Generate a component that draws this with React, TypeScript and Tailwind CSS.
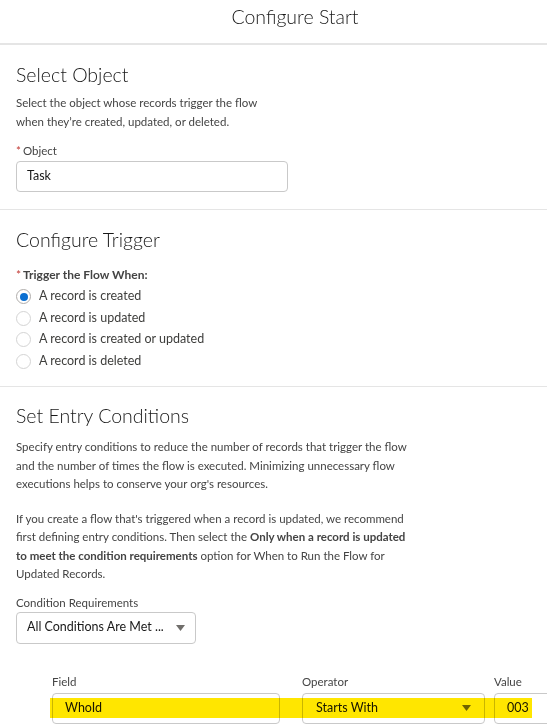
import React from 'react';

const font = { fontFamily: 'Lato, "Open Sans", "Liberation Sans", sans-serif' };

const Caret = () => (
  <svg width="9" height="6" viewBox="0 0 9 6" className="shrink-0">
    <path d="M0 0h9L4.5 6z" fill="#706e6b" />
  </svg>
);

const Radio = ({ label, checked }: { label: string; checked?: boolean }) => (
  <div className="flex items-center h-[21.5px]">
    <span
      className={`w-[15px] h-[15px] rounded-full border flex items-center justify-center bg-white ${
        checked ? 'border-[#b0adab]' : 'border-[#d4d4d4]'
      }`}
    >
      {checked && <span className="w-[8px] h-[8px] rounded-full bg-[#0b6fd1]" />}
    </span>
    <span className="ml-[8px] text-[12.5px] text-[#3e3e3c]">{label}</span>
  </div>
);

export default function App() {
  return (
    <div className="w-[547px] h-[726px] overflow-hidden bg-white text-[#444444]" style={font}>
      {/* header */}
      <div className="h-[45px] border-b-2 border-[#e5e5e5] flex items-center justify-center pl-[43px]">
        <h1 className="text-[19.5px] font-light text-[#181818] -mt-[9px]">Configure Start</h1>
      </div>

      {/* select object */}
      <section className="px-4 pt-4 pb-[17px] border-b border-[#e5e5e5]">
        <h2 className="text-[19.5px] leading-[28px] font-light text-[#181818]">Select Object</h2>
        <p className="mt-1 text-[11.5px] leading-[19px]">
          Select the object whose records trigger the flow
          <br />
          when they’re created, updated, or deleted.
        </p>
        <div className="mt-[11px] text-[11.5px] leading-[18px]">
          <span className="text-[#c23934] mr-[2px]">*</span>Object
        </div>
        <div className="mt-[1px] w-[272px] h-[31px] border border-[#c9c9c9] rounded-[4px] flex items-center px-[10px] text-[12.5px] text-[#181818]">
          Task
        </div>
      </section>

      {/* configure trigger */}
      <section className="px-4 pt-4 pb-[14px] border-b border-[#e5e5e5]">
        <h2 className="text-[19.5px] leading-[28px] font-light text-[#181818]">Configure Trigger</h2>
        <div className="mt-[12px] text-[12px] leading-[18px] font-bold">
          <span className="text-[#c23934] mr-[2px] font-normal">*</span>Trigger the Flow When:
        </div>
        <div className="mt-[2px]">
          <Radio label="A record is created" checked />
          <Radio label="A record is updated" />
          <Radio label="A record is created or updated" />
          <Radio label="A record is deleted" />
        </div>
      </section>

      {/* entry conditions */}
      <section className="px-4 pt-[15px]">
        <h2 className="text-[19.5px] leading-[28px] font-light text-[#181818]">Set Entry Conditions</h2>
        <p className="mt-[8px] text-[11.5px] leading-[18.5px]">
          Specify entry conditions to reduce the number of records that trigger the flow
          <br />
          and the number of times the flow is executed. Minimizing unnecessary flow
          <br />
          executions helps to conserve your org's resources.
        </p>
        <p className="mt-[16px] text-[11.5px] leading-[18.5px]">
          If you create a flow that's triggered when a record is updated, we recommend
          <br />
          first defining entry conditions. Then select the <b>Only when a record is updated</b>
          <br />
          <b>to meet the condition requirements</b> option for When to Run the Flow for
          <br />
          Updated Records.
        </p>
        <div className="mt-[10px] text-[11.5px] leading-[18px]">Condition Requirements</div>
        <div className="w-[180px] h-[32px] border border-[#c9c9c9] rounded-[4px] flex items-center justify-between pl-[10px] pr-[10px] text-[12.5px] text-[#181818]">
          <span>All Conditions Are Met ...</span>
          <Caret />
        </div>

        <div className="relative mt-[29px] ml-[36px] flex gap-[22px]">
          <div className="w-[228px] shrink-0">
            <div className="text-[11.5px] leading-[18px] mb-[2px]">Field</div>
            <div className="h-[31px] border border-[#c9c9c9] rounded-[4px] flex items-center px-[12px] text-[12.5px] text-[#181818]">
              WhoId
            </div>
          </div>
          <div className="w-[183px] shrink-0">
            <div className="text-[11.5px] leading-[18px] mb-[2px]">Operator</div>
            <div className="h-[31px] border border-[#c9c9c9] rounded-[4px] flex items-center justify-between px-[13px] text-[12.5px] text-[#181818]">
              <span>Starts With</span>
              <Caret />
            </div>
          </div>
          <div className="w-[80px] shrink-0 -ml-[13px]">
            <div className="text-[11.5px] leading-[18px] mb-[2px]">Value</div>
            <div className="h-[31px] border border-[#c9c9c9] rounded-[4px] flex items-center px-[12px] text-[12.5px] text-[#181818]">
              003
            </div>
          </div>
          {/* highlighter mark */}
          <div className="absolute left-[-2px] top-[25px] w-[482px] h-[20px] bg-[#ffe600] mix-blend-multiply" />
        </div>
      </section>
    </div>
  );
}
